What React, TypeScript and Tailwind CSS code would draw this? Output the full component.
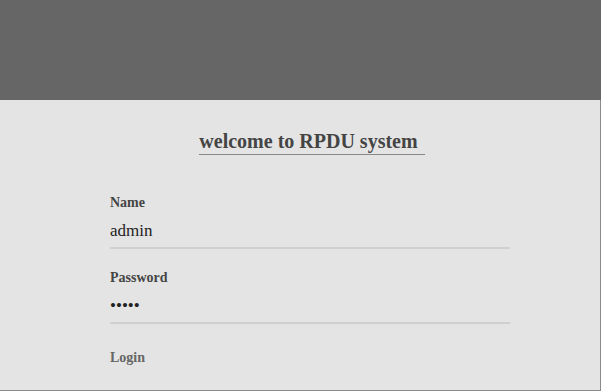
export default function App() {
  return (
    <div className="w-[601px] h-[391px] flex flex-col font-['Liberation_Serif',serif] bg-[#e4e4e4]">
      <div className="h-[100px] shrink-0 bg-[#666666]" />
      <div className="flex-1 border-r border-b border-[#8a8a8a] flex flex-col">
        <div className="flex justify-center pl-[24px] pt-[29px]">
          <h1 className="text-[20px] font-bold text-[#444] leading-[25px] border-b border-[#888] pr-[7px]">
            welcome to RPDU system
          </h1>
        </div>
        <div className="ml-[110px] w-[400px] mt-[40px] flex flex-col">
          <label className="text-[14px] font-bold text-[#444] leading-[16px]">Name</label>
          <div className="text-[17px] text-[#222] leading-[20px] mt-[10px] pb-[6px] border-b-2 border-[#cfcfcf]">admin</div>
          <label className="text-[14px] font-bold text-[#444] leading-[16px] mt-[21px]">Password</label>
          <div className="text-[17px] text-[#222] leading-[20px] mt-[10px] pb-[6px] border-b-2 border-[#cfcfcf]">•••••</div>
          <div className="text-[14px] font-bold text-[#666] leading-[16px] mt-[26px]">Login</div>
        </div>
      </div>
    </div>
  );
}
